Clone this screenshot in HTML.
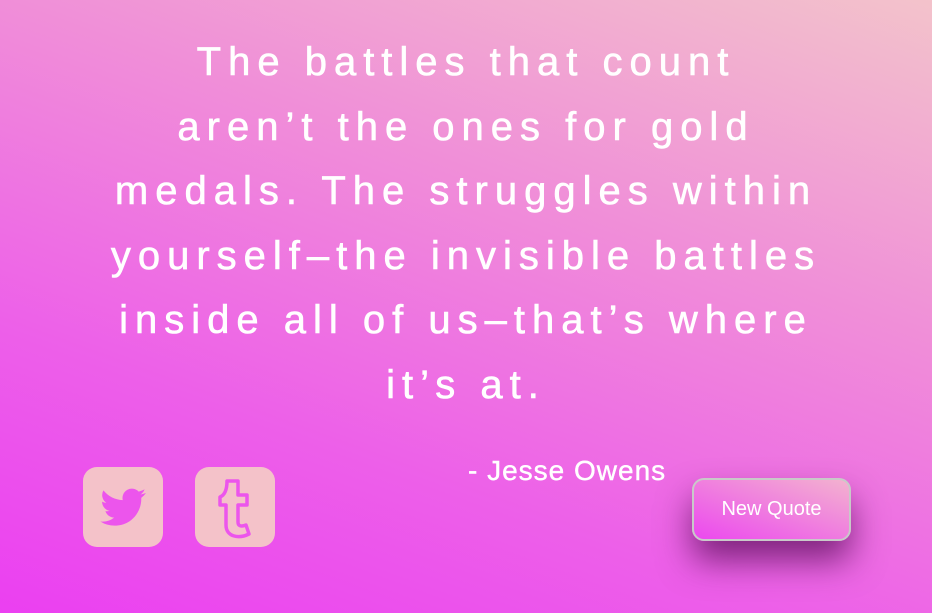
<!DOCTYPE html>
<html><head><style>
html,body{margin:0;padding:0;width:932px;height:613px;overflow:hidden}
body{background:linear-gradient(200deg,#f3c3cb 0%,#f08fd8 35%,#ed5fe9 70%,#eb3ff1 100%);font-family:"Liberation Sans",sans-serif;position:relative}
.q{position:absolute;left:30px;width:872px;top:30px;text-align:center;color:#fff;font-size:40px;letter-spacing:7px;line-height:64.5px;-webkit-text-stroke:0.6px #fff}
.a{position:absolute;left:468px;top:455px;color:#fff;font-size:28px;letter-spacing:1px;-webkit-text-stroke:0.4px #fff}
.ic{position:absolute;top:467px;width:80px;height:80px;border-radius:14px;background:#f4c2c9}
.btn{position:absolute;left:692px;top:478px;width:155px;height:59px;border:2px solid #c9c9c9;border-radius:12px;background:linear-gradient(20deg,#ec48ef,#f3b3cf);color:#fff;font-size:20px;text-align:center;line-height:59px;box-shadow:0 20px 34px rgba(100,20,100,.8)}
</style></head><body>
<div class="q">The battles that count<br>aren’t the ones for gold<br>medals. The struggles within<br>yourself–the invisible battles<br>inside all of us–that’s where<br>it’s at.</div>
<div class="a">- Jesse Owens</div>
<div class="ic" style="left:83px"><svg width="80" height="80" viewBox="0 0 24 24"><path transform="translate(5.2 5.2) scale(0.57)" fill="#ec55ec" d="M23.95 4.57a10 10 0 0 1-2.82.77 4.960 4.96 0 0 0 2.16-2.72c-.95.56-2 .96-3.12 1.19a4.92 4.92 0 0 0-8.38 4.480A13.94 13.94 0 0 1 1.64 3.160a4.92 4.92 0 0 0 1.52 6.57 4.9 4.9 0 0 1-2.23-.62v.06a4.92 4.92 0 0 0 3.95 4.83 4.996 4.996 0 0 1-2.21.08 4.930 4.93 0 0 0 4.6 3.42A9.87 9.87 0 0 1 0 19.54a13.94 13.94 0 0 0 7.55 2.21c9.05 0 14-7.5 14-13.99 0-.21 0-.42-.02-.63A9.94 9.94 0 0 0 24 4.59z"/></svg></div>
<div class="ic" style="left:195px"><svg width="80" height="80" viewBox="0 0 80 80"><path fill="#f4c2c9" stroke="#ec55ec" stroke-width="3.5" stroke-linejoin="round" d="M32 14h11v14h9v10h-9v17c0 4 3 5 8 3l3 9c-10 5-23 3-23-9V38h-6v-8c5-2 7-8 7-16z"/></svg></div>
<div class="btn">New Quote</div>
</body></html>
